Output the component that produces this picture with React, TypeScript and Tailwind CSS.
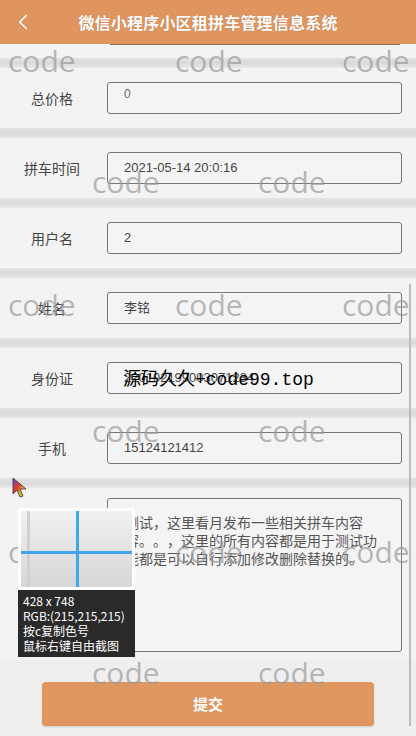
import { ChevronLeft } from 'lucide-react';

const cjk = { fontFamily: '"Noto Sans CJK SC", "Liberation Sans", sans-serif' };

interface Field {
  label: string;
  value: string;
  top?: boolean;
}

const fields: Field[] = [
  { label: '总价格', value: '0', top: true },
  { label: '拼车时间', value: '2021-05-14 20:0:16' },
  { label: '用户名', value: '2' },
  { label: '姓名', value: '李铭' },
  { label: '身份证', value: '220102199003071234' },
  { label: '手机', value: '15124121412' },
];

const marks = [
  { y: 46, xs: [8, 175, 342] },
  { y: 167, xs: [92, 258] },
  { y: 290, xs: [8, 175, 342] },
  { y: 416, xs: [92, 258] },
  { y: 537, xs: [8, 175, 342] },
  { y: 658, xs: [92, 258] },
];

const Separator = () => (
  <div className="h-[10px] bg-gradient-to-b from-[#e4e4e4] via-[#d9d9d9] to-[#e8e8e8]" />
);

const Row = ({ field }: { field: Field }) => (
  <div className="flex h-[60px] items-center bg-[#f3f3f3] pr-[14px]">
    <div className="w-[104px] text-center text-[14px] text-[#444]" style={cjk}>
      {field.label}
    </div>
    <div
      className={`ml-[3px] flex h-[32px] flex-1 rounded-[3px] border border-[#777] bg-[#f4f4f4] pl-[16px] text-[#444] ${
        field.top ? 'items-start pt-[2px] text-[12px] text-[#666]' : 'items-center text-[13px]'
      }`}
      style={{ fontFamily: '"Liberation Sans", "Noto Sans CJK SC", sans-serif' }}
    >
      {field.value}
    </div>
  </div>
);

const Cursor = () => (
  <svg width="18" height="22" viewBox="0 0 18 22" className="absolute left-[12px] top-[477px]">
    <defs>
      <linearGradient id="cur" x1="0" y1="0" x2="1" y2="1">
        <stop offset="0" stopColor="#6b3fb8" />
        <stop offset="0.45" stopColor="#e0402e" />
        <stop offset="0.7" stopColor="#f0c020" />
        <stop offset="1" stopColor="#2fae4a" />
      </linearGradient>
    </defs>
    <path d="M1 1 L1 17 L5 13 L8 20 L11 19 L8 12 L14 12 Z" fill="url(#cur)" stroke="#333" strokeWidth="0.8" />
  </svg>
);

const Picker = () => (
  <div className="absolute left-[18px] top-[508px] flex w-[117px] flex-col">
    <div className="h-[82px] bg-white p-[3px]">
      <div className="relative h-full overflow-hidden bg-gradient-to-b from-[#f1f1f1] to-[#d6d6d6]">
        <div className="absolute left-[6px] top-0 h-full w-[3px] bg-[#d0d0d0]" />
        <div className="absolute left-0 top-[40px] h-[3px] w-full bg-[#3ea8ea]" />
        <div className="absolute left-[55px] top-0 h-full w-[3px] bg-[#3ea8ea]" />
      </div>
    </div>
    <div
      className="bg-[#2a2a2a] px-[5px] pb-[4px] pt-[3px] text-[12px] leading-[15px] text-white"
      style={{ fontFamily: '"Noto Sans CJK SC", "Open Sans", sans-serif' }}
    >
      <div>428 x 748</div>
      <div>RGB:(215,215,215)</div>
      <div>按c复制色号</div>
      <div>鼠标右键自由截图</div>
    </div>
  </div>
);

export default function App() {
  return (
    <div className="relative h-[736px] w-[416px] overflow-hidden bg-[#efefef]" style={cjk}>
      <header className="relative flex h-[44px] items-center justify-center bg-[#e0955f] text-white">
        <ChevronLeft className="absolute left-[10px] top-[9px]" size={26} strokeWidth={1.6} />
        <h1 className="text-[16px] font-bold tracking-[0.2px] [text-shadow:0_0_1px_rgba(0,0,0,0.25)]">
          微信小程序小区租拼车管理信息系统
        </h1>
      </header>

      <div className="h-[14px] bg-[#f3f3f3] pl-[110px] pr-[16px]">
        <div className="h-[1px] bg-[#8a6a55]" />
      </div>

      {fields.map((f) => (
        <div key={f.label}>
          <Separator />
          <Row field={f} />
        </div>
      ))}
      <Separator />

      <div className="flex h-[172px] bg-[#f3f3f3] pb-[8px] pl-[107px] pr-[14px] pt-[10px]">
        <div className="flex-1 rounded-[3px] border border-[#777] bg-[#f4f4f4] pl-[17px] pt-[14px] text-[14px] leading-[18px] text-[#555] [text-spacing-trim:space-all]">
          <div>测试，这里看月发布一些相关拼车内容</div>
          <div>容。。，这里的所有内容都是用于测试功</div>
          <div>能都是可以自行添加修改删除替换的。</div>
        </div>
      </div>

      <div className="px-[42px] pt-[22px]">
        <button className="flex h-[44px] w-full items-center justify-center rounded-[4px] bg-[#e0965f] text-[15px] font-bold text-white shadow-[0_1px_2px_rgba(0,0,0,0.15)]">
          提交
        </button>
      </div>

      {marks.map((m) =>
        m.xs.map((x) => (
          <span
            key={`${m.y}-${x}`}
            className="pointer-events-none absolute text-[30px] leading-[30px] text-[#9a9a9a]/70"
            style={{ left: x, top: m.y, fontFamily: '"Open Sans", sans-serif' }}
          >
            code
          </span>
        ))
      )}

      <div className="absolute right-[5px] top-[284px] h-[442px] w-[2px] bg-[#bcbcbc]" />

      <span
        className="absolute left-[123px] top-[367px] text-[18px] leading-[26px] text-black"
        style={{ fontFamily: '"Liberation Mono", "Noto Sans CJK SC", monospace' }}
      >
        源码久久+code99.top
      </span>

      <Picker />
      <Cursor />
    </div>
  );
}
